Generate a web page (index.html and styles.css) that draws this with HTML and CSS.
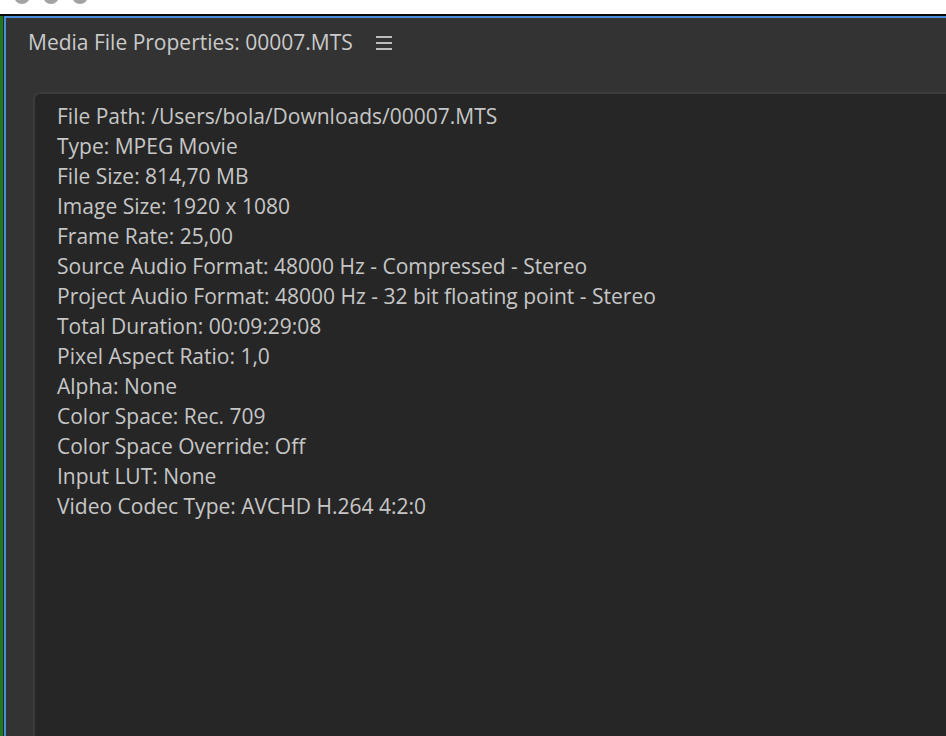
FILE: index.html
```html
<!DOCTYPE html>
<html>
<head>
<meta charset="utf-8">
<link rel="stylesheet" href="styles.css">
</head>
<body>
<div class="topbar">
  <span class="light"></span><span class="light"></span><span class="light"></span>
</div>
<div class="window">
  <div class="edge"></div>
  <div class="panel">
    <div class="panel-head">
      <span class="title">Media File Properties: 00007.MTS</span>
      <svg class="menu" width="16" height="15" viewBox="0 0 16 15"><rect x="0" y="0" width="16" height="2" fill="#bdbdbd"/><rect x="0" y="6" width="16" height="2" fill="#bdbdbd"/><rect x="0" y="12" width="16" height="2" fill="#bdbdbd"/></svg>
    </div>
    <div class="content">
      <div class="line">File Path: /Users/bola/Downloads/00007.MTS</div>
      <div class="line">Type: MPEG Movie</div>
      <div class="line">File Size: 814,70 MB</div>
      <div class="line">Image Size: 1920 x 1080</div>
      <div class="line">Frame Rate: 25,00</div>
      <div class="line">Source Audio Format: 48000 Hz - Compressed - Stereo</div>
      <div class="line">Project Audio Format: 48000 Hz - 32 bit floating point - Stereo</div>
      <div class="line">Total Duration: 00:09:29:08</div>
      <div class="line">Pixel Aspect Ratio: 1,0</div>
      <div class="line">Alpha: None</div>
      <div class="line">Color Space: Rec. 709</div>
      <div class="line">Color Space Override: Off</div>
      <div class="line">Input LUT: None</div>
      <div class="line">Video Codec Type: AVCHD H.264 4:2:0</div>
    </div>
  </div>
</div>
</body>
</html>
```
FILE: styles.css
```css
html, body {
  margin: 0;
  padding: 0;
  height: 100%;
  overflow: hidden;
  background: #ffffff;
}
body {
  display: flex;
  flex-direction: column;
  font-family: "Open Sans", "Lato", sans-serif;
}
.topbar {
  height: 14px;
  flex: none;
  background: #ffffff;
  display: flex;
  align-items: flex-end;
  gap: 13px;
  padding-left: 14px;
  overflow: hidden;
}
.light {
  width: 16px;
  height: 16px;
  border-radius: 50%;
  background: #a3a3a3;
  margin-bottom: 10px;
  flex: none;
}
.window {
  flex: 1;
  display: flex;
  border-top: 2px solid #0a0a0a;
  background: #111;
  min-height: 0;
}
.edge {
  width: 3px;
  background: #1f7a1f;
  border-right: 1px solid #2a2a2a;
  flex: none;
}
.panel {
  flex: 1;
  display: flex;
  flex-direction: column;
  background: #333333;
  border-top: 2px solid #4a8fdc;
  border-left: 2px solid #4a8fdc;
  min-width: 0;
}
.panel-head {
  height: 74px;
  flex: none;
  display: flex;
  align-items: flex-start;
  padding: 11px 0 0 22px;
  box-sizing: border-box;
}
.title {
  color: #cacaca;
  font-size: 21px;
  line-height: 26px;
}
.menu {
  margin: 7px 0 0 23px;
}
.content {
  flex: 1;
  margin-left: 27px;
  background: #262626;
  border-top: 2px solid #3b3b3b;
  border-left: 2px solid #3b3b3b;
  border-top-left-radius: 7px;
  padding: 7px 0 0 22px;
}
.line {
  color: #c6c6c6;
  font-size: 21px;
  line-height: 30px;
  white-space: nowrap;
}
```
